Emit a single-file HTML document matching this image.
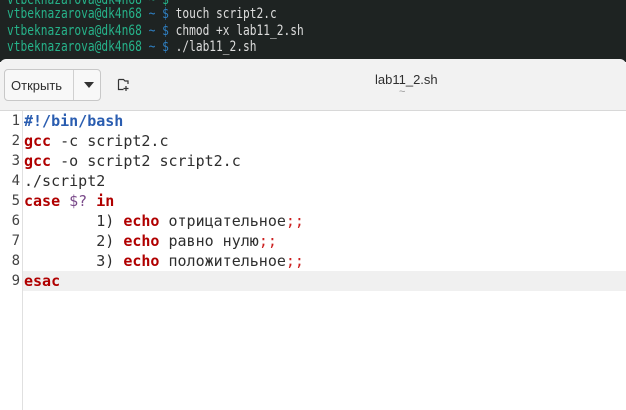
<!DOCTYPE html>
<html><head><meta charset="utf-8"><style>
html,body{margin:0;padding:0;width:626px;height:410px;overflow:hidden;background:#fff;font-family:"Liberation Sans","DejaVu Sans",sans-serif}
#term{position:absolute;left:0;top:0;width:626px;height:62px;background:#1e2322;font-family:"DejaVu Sans Mono",monospace;font-size:14px;color:#ddd}
#term div{position:absolute;left:7px;white-space:pre;transform:scaleX(0.8);transform-origin:0 0}
.g{color:#26b38a}.b{color:#2f7fc1}
#hdr{position:absolute;left:0;top:59px;width:626px;height:51px;background:#f2f2f2;border-radius:6px 6px 0 0;border-bottom:1px solid #d8d8d8}
#btn{position:absolute;left:4px;top:10px;width:97px;height:32px;border:1px solid #c8c8c8;border-radius:4px;background:#f8f8f8;box-sizing:border-box}
#btn span{position:absolute;left:6px;top:8px;font-size:13px;color:#2e2e2e}
#btn i{position:absolute;left:68px;top:0;width:1px;height:30px;background:#d0d0d0}
#btn b{position:absolute;left:79px;top:12px;border-left:5px solid transparent;border-right:5px solid transparent;border-top:6px solid #333}
#title{position:absolute;left:375px;top:13px;font-size:13px;color:#2e2e2e}
#title2{position:absolute;left:399px;top:27px;font-size:11px;color:#999}
#ed{position:absolute;left:0;top:111px;width:626px;height:299px;font-family:"DejaVu Sans Mono",monospace;font-size:15px}
#gut{position:absolute;left:0;top:0;width:22px;height:299px;border-right:1px solid #e0e0e0;background:#fff}
.ln{position:absolute;left:0;width:626px;height:20px;line-height:20px;white-space:pre}
.ln .n{position:absolute;left:7px;width:13px;text-align:right;color:#444;font-size:14px}
.ln .t{position:absolute;left:24px;color:#2e2e2e}
.k{color:#b00000;font-weight:bold}.p{color:#2a5db0;font-weight:bold}.v{color:#7a4a8a}.s{color:#cc2020}
</style></head><body>
<div id="term">
<div style="top:-8px" class="g">vtbeknazarova@dk4n68 ~ $</div>
<div style="top:6px"><span class="g">vtbeknazarova@dk4n68</span> <span class="b">~ $</span> touch script2.c</div>
<div style="top:23px"><span class="g">vtbeknazarova@dk4n68</span> <span class="b">~ $</span> chmod +x lab11_2.sh</div>
<div style="top:39px"><span class="g">vtbeknazarova@dk4n68</span> <span class="b">~ $</span> ./lab11_2.sh</div>
</div>
<div id="hdr">
<div id="btn"><span>Открыть</span><i></i><b></b></div>
<svg style="position:absolute;left:117px;top:19px" width="14" height="14" viewBox="0 0 14 14"><path d="M1.5 1.5h5l1.5 1.5h3v3M1.5 1.5v10h5M9 8v5M6.5 10.5h5" fill="none" stroke="#333" stroke-width="1.2"/></svg>
<div id="title">lab11_2.sh</div>
<div id="title2">~</div>
</div>
<div id="ed">
<div class="ln" style="top:160px;background:#f0f0f0"></div>
<div id="gut"></div>
<div class="ln" style="top:0"><span class="n">1</span><span class="t"><span class="p">#!/bin/bash</span></span></div>
<div class="ln" style="top:20px"><span class="n">2</span><span class="t"><span class="k">gcc</span> -c script2.c</span></div>
<div class="ln" style="top:40px"><span class="n">3</span><span class="t"><span class="k">gcc</span> -o script2 script2.c</span></div>
<div class="ln" style="top:60px"><span class="n">4</span><span class="t">./script2</span></div>
<div class="ln" style="top:80px"><span class="n">5</span><span class="t"><span class="k">case</span> <span class="v">$?</span> <span class="k">in</span></span></div>
<div class="ln" style="top:100px"><span class="n">6</span><span class="t">        1) <span class="k">echo</span> отрицательное<span class="s">;;</span></span></div>
<div class="ln" style="top:120px"><span class="n">7</span><span class="t">        2) <span class="k">echo</span> равно нулю<span class="s">;;</span></span></div>
<div class="ln" style="top:140px"><span class="n">8</span><span class="t">        3) <span class="k">echo</span> положительное<span class="s">;;</span></span></div>
<div class="ln" style="top:160px"><span class="n">9</span><span class="t"><span class="k">esac</span></span></div>
</div>
</body></html>
